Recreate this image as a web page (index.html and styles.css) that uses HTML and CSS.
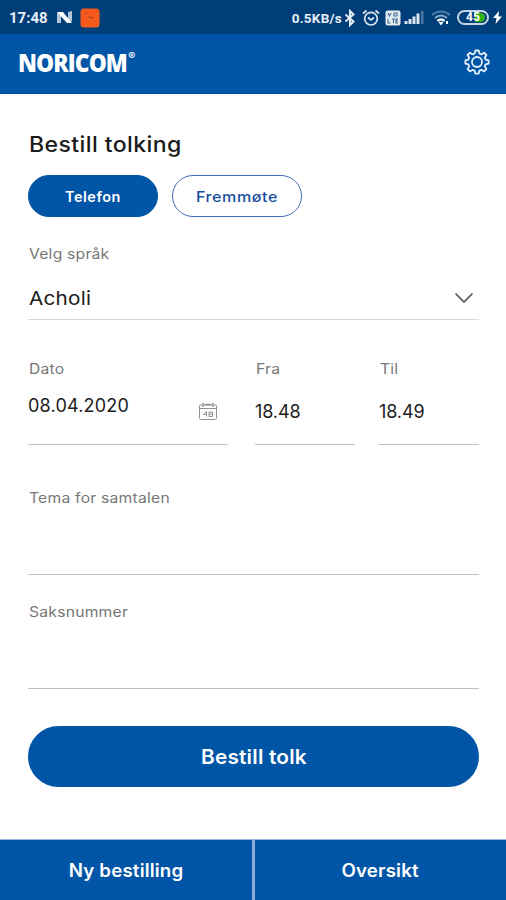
FILE: index.html
```html
<!DOCTYPE html>
<html lang="no">
<head>
<meta charset="utf-8">
<title>Noricom</title>
<link rel="stylesheet" href="styles.css">
</head>
<body>
<div class="app">
  <div class="status">
    <span class="clock">17:48</span>
    <svg class="icon-n" width="17" height="13" viewBox="0 0 17 13"><path d="M1 12V2l4-1v11zM12 1l4-1v10l-4 2z" fill="#b3c6d9"/><path d="M1 1h6l9 11h-5z" fill="#fff"/></svg>
    <svg class="icon-app" width="20" height="20" viewBox="0 0 20 20"><rect x=".5" y=".5" width="19" height="19" rx="3.5" fill="#f55a1c"/><path d="M4 7l2-2M7 5l1-1M8 8l2 2 2-1 1 2" fill="none" stroke="#9c4028"/></svg>
    <span class="speed">0.5KB/s</span>
    <svg class="icon-bt" width="12" height="18" viewBox="0 0 12 18"><path d="M1.500 5.500l8 7L6 16V2l3.500 3.500-8 7" fill="none" stroke="#e4edf5" stroke-width="2"/></svg>
    <svg class="icon-alarm" width="18" height="18" viewBox="0 0 18 18"><g fill="none" stroke="#dbe7f1" stroke-width="1.700"><circle cx="9" cy="9.700" r="6.300"/><path d="M1 4.500L4.500 1.500M17 4.500L13.500 1.500M6 8.500l3 2.500 3-2.500"/></g></svg>
    <svg class="icon-lte" width="16" height="16" viewBox="0 0 16 16"><rect x=".5" y=".5" width="15" height="15" rx="2" fill="#e3ebf2"/><path d="M3 3l1.500 3L6 3M9 3v3h3V3zM3 9v4h2.500M7 9h3M8.500 9v4M13 9h-2v4h2M11 11h2" fill="none" stroke="#42698e" stroke-width="1.100"/></svg>
    <svg class="icon-signal" width="20" height="15" viewBox="0 0 20 15"><path d="M.5 14v-3h3v3zM4.500 14V9h3v5zM8.500 14V6.500h3V14zM12.500 14V3.500h3V14z" fill="#dbe5ef"/><path d="M17 14V1h2.500v13z" fill="#4c789f"/></svg>
    <svg class="icon-wifi" width="20" height="16" viewBox="0 0 20 16"><g fill="none"><path d="M1 5Q10-2 19 5" stroke="#4b7ca6" stroke-width="2"/><path d="M4 8q6-5 12 0" stroke="#8cabc6" stroke-width="2"/><path d="M6.500 11q3.500-3 7 0" stroke="#fff" stroke-width="2.500"/></g><path d="M7.500 12h5L10 15.500zM15 11h2v3h-2z" fill="#fff"/></svg>
    <span class="battery"><span class="charge"></span><span class="percent">45</span></span>
    <svg class="icon-bolt" width="9" height="13" viewBox="0 0 9 13"><path d="M6 0L0 7h3.500L2.500 13 9 5.500H5.500z" fill="#fff"/></svg>
  </div>
  <header class="header">
    <div class="brand"><span class="wordmark">NORICOM</span><span class="reg">®</span></div>
    <svg width="26" height="26" viewBox="0 0 26 26"><g fill="none" stroke="#e5effa" stroke-width="1.800" stroke-linejoin="round"><path d="M11.300 1.500h3.400l.7 3 2 .9 2.700-1.700 2.300 2.300-1.600 2.700.8 2 3 .7v3.300l-3 .7-.8 2 1.600 2.700-2.300 2.300-2.700-1.600-2 .8-.7 3h-3.400l-.7-3-2-.8-2.700 1.600L3.600 20.100l1.600-2.700-.8-2-3-.7v-3.300l3-.7.8-2L3.600 6l2.300-2.300 2.700 1.700 2-.9z"/><circle cx="13" cy="13" r="5"/></g></svg>
  </header>
  <main class="form">
    <h1 class="title">Bestill tolking</h1>
    <div class="types">
      <button class="pill active">Telefon</button>
      <button class="pill"><span class="wide">Fremmøte</span></button>
    </div>
    <div class="field language">
      <label class="label">Velg språk</label>
      <div class="value"><span class="choice">Acholi</span>
        <svg width="20" height="12" viewBox="0 0 20 12"><path d="M1.500 1.500l8.500 8.500 8.500-8.500" fill="none" stroke="#555" stroke-width="1.700"/></svg>
      </div>
    </div>
    <div class="times">
      <div class="field">
        <label class="label">Dato</label>
        <div class="value">08.04.2020
          <svg class="calendar" width="18" height="17" viewBox="0 0 18 17"><g fill="none" stroke="#929292"><rect x=".5" y="2" width="17" height="14.500" rx="1"/><path d="M1 5.500h16"/><path d="M4 0v4M14 0v4M6 1.500h6" stroke-width="1.500"/><path d="M7.500 8.500v5M7.500 8.500L4.500 11.500h3.500M10 9h3.500v4.500H10zM10 11.200h3.500"/></g></svg>
        </div>
      </div>
      <div class="field"><label class="label">Fra</label><div class="value time">18.48</div></div>
      <div class="field"><label class="label">Til</label><div class="value time">18.49</div></div>
    </div>
    <div class="field entry topic"><label class="label">Tema for samtalen</label></div>
    <div class="field entry case"><label class="label">Saksnummer</label></div>
    <button class="submit"><span class="wide-sm">Bestill tolk</span></button>
  </main>
  <nav class="tabs"><a class="tab new"><span class="wide-sm">Ny bestilling</span></a><a class="tab"><span class="wide-sm">Oversikt</span></a></nav>
</div>
</body>
</html>
```
FILE: styles.css
```css
* { box-sizing: border-box; }
body { margin: 0; background: #fff; }
.app { width: 506px; height: 900px; display: flex; flex-direction: column; font-family: Inter, "Liberation Sans", sans-serif; color: #202020; }
button { font: inherit; padding: 0; border: 0; }
svg { display: block; flex: none; }
.status { height: 34px; background: #003e79; color: #e8eff6; display: flex; align-items: center; padding: 1px 4px 0 9px; font-family: Roboto, sans-serif; font-weight: 700; }
.clock { font-size: 15px; width: 47px; }
.icon-app { margin-left: 7px; }
.speed { margin-left: auto; font-size: 13.500px; letter-spacing: .25px; }
.icon-bt { margin-left: 2px; }
.icon-alarm { margin-left: 6px; }
.icon-lte { margin-left: 5px; }
.icon-signal { margin-left: 3px; }
.icon-wifi { margin-left: 7px; }
.battery { position: relative; width: 32px; height: 15px; margin-left: 6px; border: 2px solid #c5d5e4; border-radius: 8px; overflow: hidden; font-size: 12px; line-height: 11px; text-align: center; color: #fff; }
.charge { position: absolute; right: 2px; top: 1px; width: 10px; height: 9px; border-radius: 0 5px 5px 0; background: #31b516; }
.percent { position: relative; }
.icon-bolt { margin-left: 4px; }
.header { height: 60px; background: #0055a6; border-bottom: 1px solid #0049a0; display: flex; justify-content: space-between; align-items: center; padding: 0 16px 4px 18px; color: #fff; }
.brand { display: flex; align-items: flex-start; }
.wordmark { width: 110px; font: 800 25px/28px "Open Sans", sans-serif; letter-spacing: -1px; transform: scaleX(.91); transform-origin: left center; }
.reg { font-size: 11px; line-height: 17px; font-weight: 600; }
.form { flex: 1; padding: 36px 27px 0 28px; }
.title { margin: 0; font-size: 21px; line-height: 29px; height: 28px; font-weight: 500; letter-spacing: .35px; color: #1b1b1b; transform: translateX(1px) scaleX(1.1); transform-origin: left center; }
.types { display: flex; gap: 14px; margin-top: 17px; }
.pill { width: 130px; height: 42px; border: 1.500px solid #436fb4; border-radius: 21px; background: #fff; color: #174f9f; font-size: 14.500px; font-weight: 500; letter-spacing: .5px; }
.wide, .wide-sm { display: inline-block; }
.wide { transform: scaleX(1.11); }
.wide-sm { transform: scaleX(1.04); }
.active { background: #0055a6; border-color: #0055a6; color: #fff; font-weight: 600; }
.field { border-bottom: 1.500px solid #c1c1c1; }
.label { width: fit-content; display: block; font-size: 14px; line-height: 21px; height: 20px; letter-spacing: .2px; color: #777; transform: translateX(1px) scaleX(1.12); transform-origin: left center; }
.value { display: flex; align-items: center; justify-content: space-between; font-size: 19px; letter-spacing: .2px; }
.choice { transform: translateX(1px) scaleX(1.09); transform-origin: left center; }
.language { height: 77px; margin-top: 26px; border-color: #d8d8d8; }
.language .value { height: 32px; margin-top: 19px; padding-right: 5px; }
.times { display: grid; grid-template-columns: 200px 100px 100px; column-gap: 27px; justify-content: start; margin-top: 38px; }
.times .field { height: 87px; }
.times .field:last-child { margin-left: -3px; margin-right: 3px; }
.times .value { height: 26px; margin-top: 14px; font-size: 18px; }
.times .time { margin-top: 20px; letter-spacing: -.1px; }
.calendar { position: relative; top: 6px; margin-right: 11px; }
.entry { height: 88px; }
.topic { margin-top: 42px; }
.case { margin-top: 26px; }
.submit { width: 100%; height: 61px; margin-top: 37px; border-radius: 31px; background: #0055a6; color: #fff; font-size: 20px; font-weight: 600; letter-spacing: .2px; }
.tabs { height: 61px; display: flex; border-top: 1px solid #99b5df; background: #0055a6; color: #fff; font-size: 18px; font-weight: 600; letter-spacing: .15px; }
.tab { flex: 1; display: flex; align-items: center; justify-content: center; }
.new { border-right: 3px solid #8eacd9; }
```
